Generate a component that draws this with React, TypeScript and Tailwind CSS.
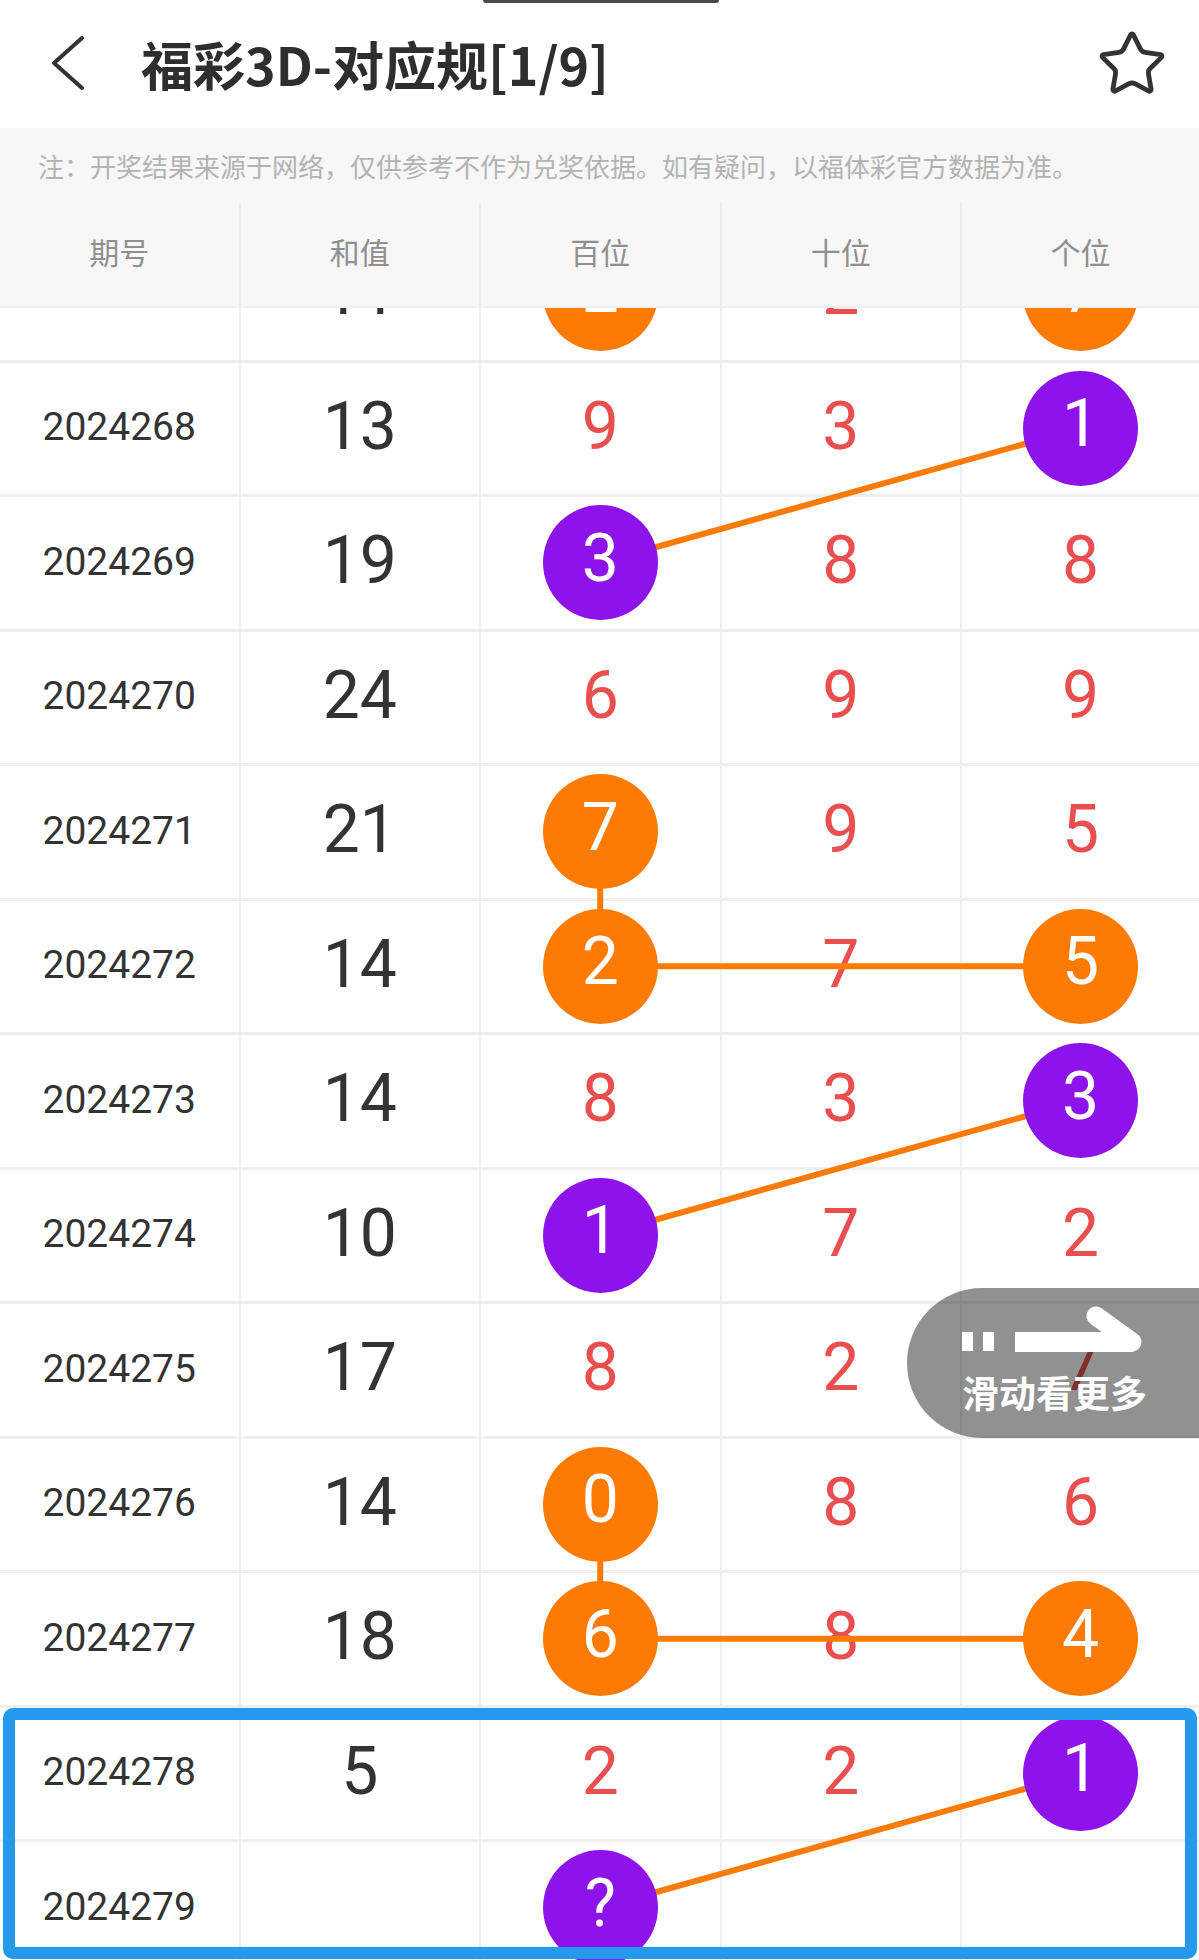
import React from "react";
import { Star } from "lucide-react";

type Row = { p: string; s: string; d: string[]; c: (null | "o" | "p")[] };

const rows: Row[] = [
  { p: "2024267", s: "11", d: ["2", "2", "7"], c: ["o", null, "o"] },
  { p: "2024268", s: "13", d: ["9", "3", "1"], c: [null, null, "p"] },
  { p: "2024269", s: "19", d: ["3", "8", "8"], c: ["p", null, null] },
  { p: "2024270", s: "24", d: ["6", "9", "9"], c: [null, null, null] },
  { p: "2024271", s: "21", d: ["7", "9", "5"], c: ["o", null, null] },
  { p: "2024272", s: "14", d: ["2", "7", "5"], c: ["o", null, "o"] },
  { p: "2024273", s: "14", d: ["8", "3", "3"], c: [null, null, "p"] },
  { p: "2024274", s: "10", d: ["1", "7", "2"], c: ["p", null, null] },
  { p: "2024275", s: "17", d: ["8", "2", "7"], c: [null, null, null] },
  { p: "2024276", s: "14", d: ["0", "8", "6"], c: ["o", null, null] },
  { p: "2024277", s: "18", d: ["6", "8", "4"], c: ["o", null, "o"] },
  { p: "2024278", s: "5", d: ["2", "2", "1"], c: [null, null, "p"] },
  { p: "2024279", s: "", d: ["?", "", ""], c: ["p", null, null] },
];

const ROW_H = 134.5;
const COL_W = 240.5;
const cx = (c: number) => (c < 4 ? c * COL_W + (COL_W - 2) / 2 : 4 * COL_W + (1199 - 4 * COL_W) / 2);
const cy = (r: number) => r * ROW_H + (ROW_H - 3) / 2;

const links: [number, number, number, number][] = [
  [0, 2, 0, 4],
  [1, 4, 2, 2],
  [4, 2, 5, 2],
  [5, 2, 5, 4],
  [6, 4, 7, 2],
  [9, 2, 10, 2],
  [10, 2, 10, 4],
  [11, 4, 12, 2],
];

const GRID = "grid grid-cols-[240.5px_240.5px_240.5px_240.5px_1fr]";

function Ball({ kind, v }: { kind: "o" | "p"; v: string }) {
  const bg = kind === "o" ? "bg-[#fd7b03]" : "bg-[#8e13ea]";
  return (
    <div
      className={`relative z-20 w-[115px] h-[115px] rounded-full ${bg} flex items-center justify-center pb-[8px] text-white text-[66px] leading-none`}
    >
      {v}
    </div>
  );
}

export default function App() {
  return (
    <div className="relative w-[1199px] h-[1960px] overflow-hidden bg-white font-['Roboto','Noto_Sans_CJK_SC',sans-serif]">
      {/* top notch fragment */}
      <div className="absolute top-0 left-[483px] w-[236px] h-[3px] rounded-b-full bg-[#4a4a4a]" />

      {/* header */}
      <div className="h-[128px] flex items-center">
        <svg className="ml-[51px]" width="34" height="56" viewBox="0 0 34 56">
          <polyline
            points="31,2 3,27 31,52"
            fill="none"
            stroke="#333333"
            strokeWidth="4"
            strokeLinecap="round"
            strokeLinejoin="round"
          />
        </svg>
        <div className="ml-[56px] text-[52px] font-bold text-[#2e2e2e] leading-none font-['Noto_Sans_CJK_SC',sans-serif]">
          福彩3D-对应规[1/9]
        </div>
        <Star className="ml-auto mr-[31px]" size={72} strokeWidth={1.6} color="#333333" />
      </div>

      {/* notice */}
      <div className="h-[75px] bg-[#f7f7f7] flex items-center pl-[38px] text-[26px] text-[#b3b3b3] font-['Noto_Sans_CJK_SC',sans-serif] leading-none">
        注：开奖结果来源于网络，仅供参考不作为兑奖依据。如有疑问，以福体彩官方数据为准。
      </div>

      {/* table header */}
      <div className={`h-[105px] bg-[#f7f7f7] ${GRID} border-b-2 border-[#efefef] text-[30px] text-[#8f8f8f] font-['Noto_Sans_CJK_SC',sans-serif]`}>
        {["期号", "和值", "百位", "十位", "个位"].map((h, i) => (
          <div
            key={h}
            className={`flex items-center justify-center pb-[6px] ${i < 4 ? "border-r-2 border-[#ececec]" : ""}`}
          >
            {h}
          </div>
        ))}
      </div>

      {/* body */}
      <div className="relative h-[1652px] overflow-hidden">
        <div className="relative -mt-[80px]">
          {rows.map((r) => (
            <div key={r.p} className={`${GRID} h-[134.5px] border-b-[3px] border-[#efefef]`}>
              <div className="flex items-center justify-center border-r-2 border-[#efefef] pb-[1px] text-[39px] text-[#333333] leading-none">
                {r.p}
              </div>
              <div className="flex items-center justify-center border-r-2 border-[#efefef] pb-[3px] text-[66px] text-[#333333] leading-none">
                {r.s}
              </div>
              {r.d.map((v, i) => {
                const k = r.c[i];
                return (
                  <div
                    key={i}
                    className={`flex items-center justify-center leading-none text-[66px] text-[#e94f4f] ${
                      i < 2 ? "border-r-2 border-[#efefef]" : ""
                    } ${k ? "" : "pb-[3px]"}`}
                  >
                    {k ? <Ball kind={k} v={v} /> : v}
                  </div>
                );
              })}
            </div>
          ))}
          <svg
            className="absolute top-0 left-0 z-10 pointer-events-none"
            width="1199"
            height={rows.length * ROW_H}
          >
            {links.map(([r1, c1, r2, c2], i) => (
              <line
                key={i}
                x1={cx(c1)}
                y1={cy(r1)}
                x2={cx(c2)}
                y2={cy(r2)}
                stroke="#fb7b06"
                strokeWidth="6"
              />
            ))}
          </svg>
        </div>
      </div>

      {/* swipe hint */}
      <div className="absolute z-30 left-[907px] top-[1288px] w-[310px] h-[150px] rounded-l-[75px] bg-black/[0.43] flex flex-col pl-[55px] pt-[18px]">
        <svg width="180" height="48" viewBox="0 0 180 48">
          <rect x="0" y="26" width="11" height="19" fill="white" />
          <rect x="21" y="26" width="11" height="19" fill="white" />
          <rect x="53" y="26" width="118" height="20" fill="white" />
          <line x1="134" y1="10" x2="170" y2="36" stroke="white" strokeWidth="19" strokeLinecap="round" />
        </svg>
        <div className="mt-[20px] text-[37px] font-bold text-white leading-none font-['Noto_Sans_CJK_SC',sans-serif]">
          滑动看更多
        </div>
      </div>

      {/* highlight box */}
      <div className="absolute z-30 left-[3px] top-[1708px] w-[1194px] h-[251px] border-[12px] border-[#2599ec] rounded-[10px]" />
    </div>
  );
}
